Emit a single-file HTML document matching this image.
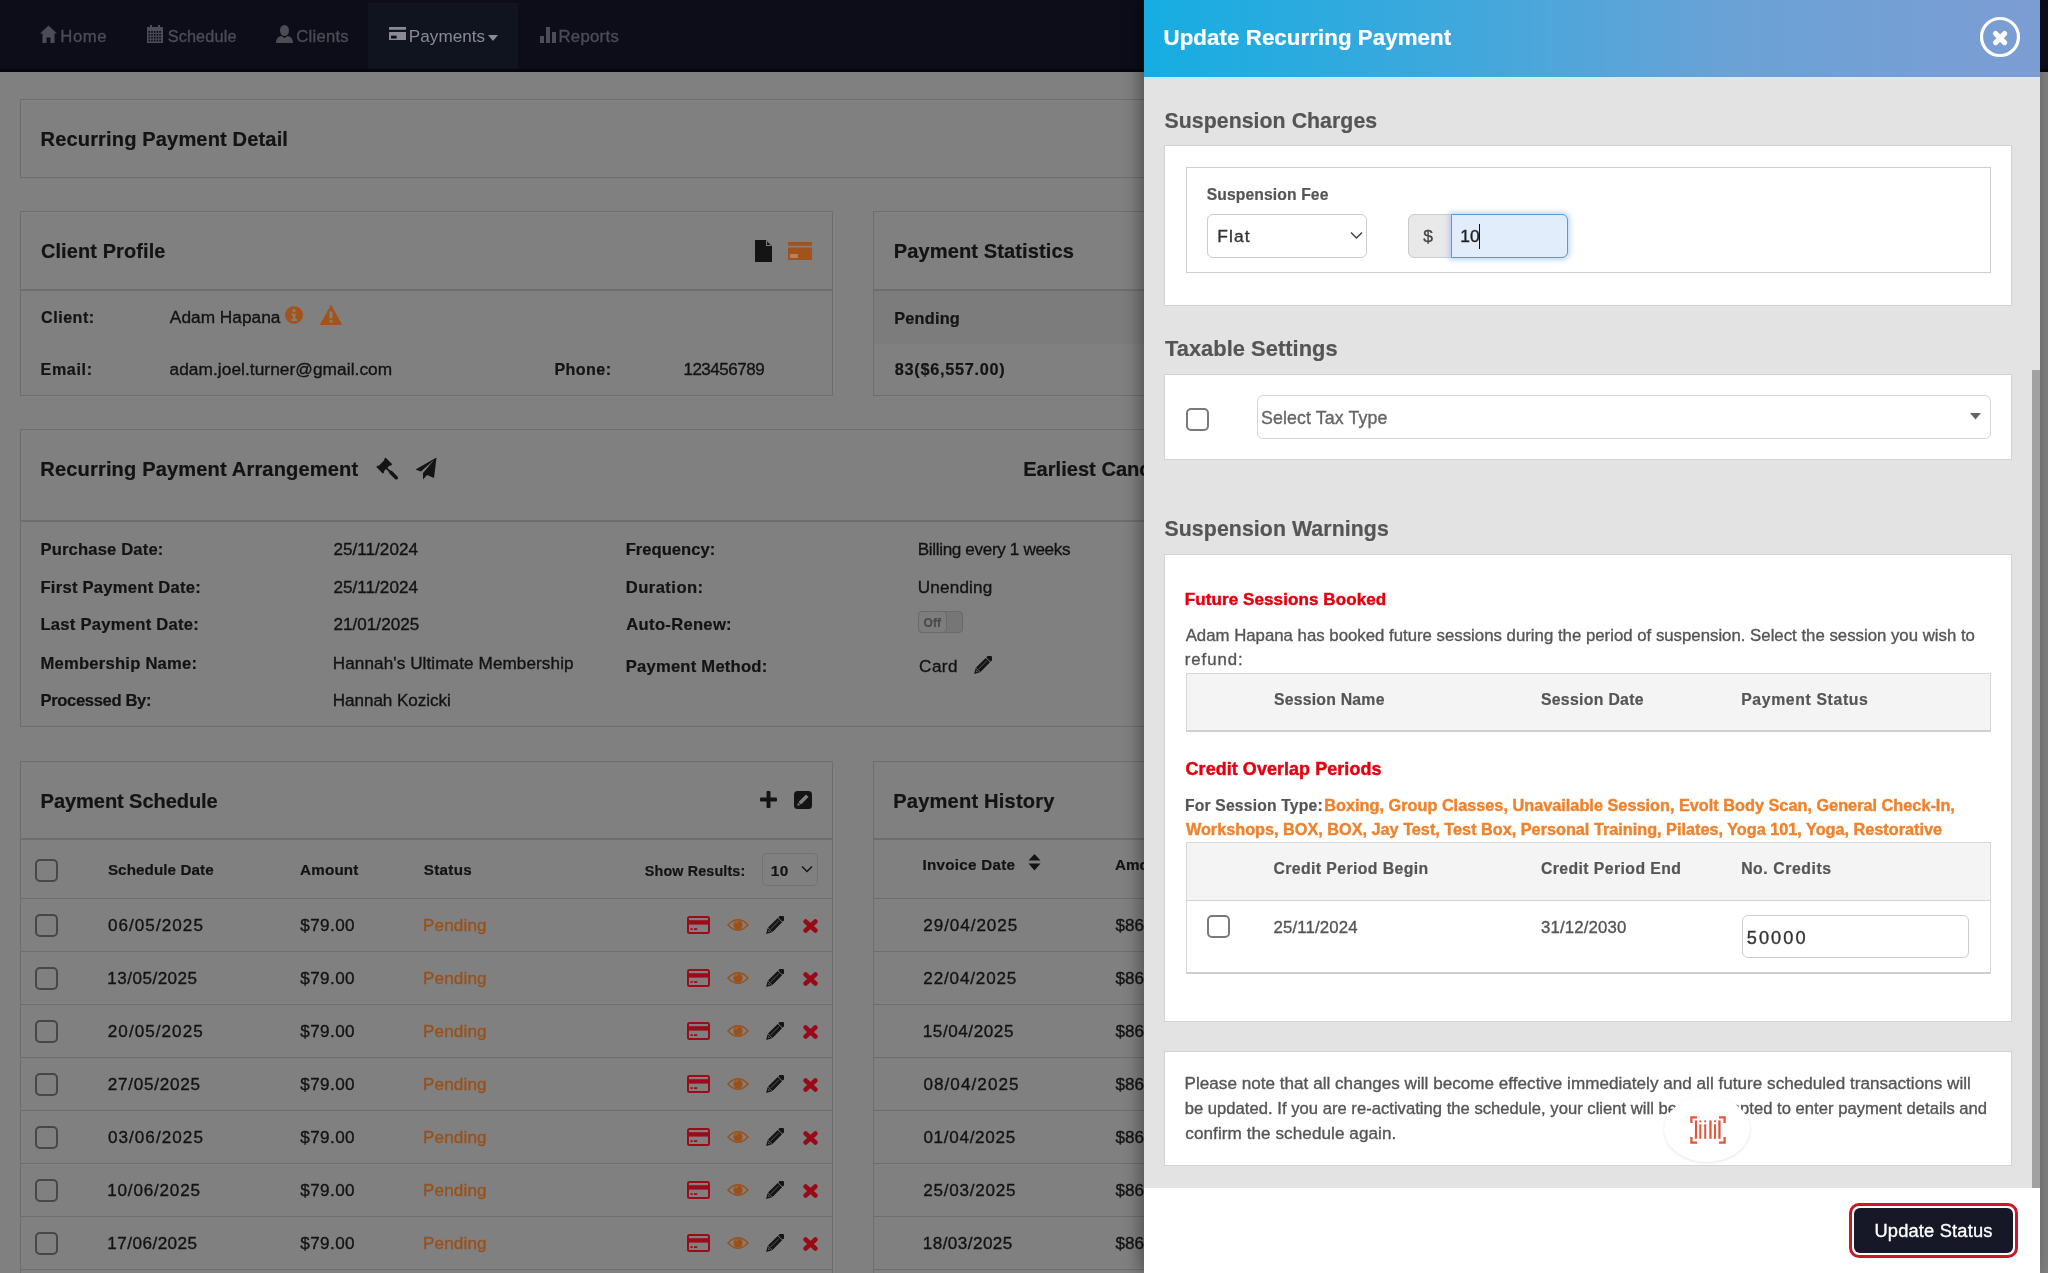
<!DOCTYPE html>
<html><head><meta charset="utf-8"><style>
html,body{margin:0;padding:0;}
body{width:2048px;height:1273px;overflow:hidden;position:relative;background:#808080;font-family:"Liberation Sans",sans-serif;}
.a{position:absolute;}
.t{position:absolute;white-space:nowrap;line-height:1;}
#w{position:absolute;left:0;top:0;width:2048px;height:1273px;will-change:transform;}
svg{display:block;}
</style></head><body><div id="w">
<div class="a" style="left:0px;top:0px;width:2048px;height:69px;background:#0c0d19;"></div><div class="a" style="left:0px;top:69px;width:2048px;height:3px;background:#06070d;"></div><div class="a" style="left:368px;top:3px;width:150px;height:66px;background:#10141e;"></div><svg class="a" style="left:40px;top:25px;" width="17" height="18" viewBox="0 0 17 18"><path d="M8.5 0.5 L17 8.5 L14.5 8.5 L14.5 18 L10.5 18 L10.5 12.5 L6.5 12.5 L6.5 18 L2.5 18 L2.5 8.5 L0 8.5 Z" fill="#4b4c54"/></svg><div class="t" style="left:60.28px;top:29px;font-size:16.7px;-webkit-text-stroke:0.35px #4b4c54;color:#4b4c54;letter-spacing:0.613px;">Home</div><svg class="a" style="left:147px;top:25px;" width="16" height="18" viewBox="0 0 16 18"><rect x="0" y="2" width="16" height="16" fill="#4b4c54"/><rect x="3" y="0" width="2" height="4" fill="#4b4c54"/><rect x="11" y="0" width="2" height="4" fill="#4b4c54"/><rect x="1.5" y="6.0" width="1.6" height="1.8" fill="#0c0d19"/><rect x="1.5" y="8.9" width="1.6" height="1.8" fill="#0c0d19"/><rect x="1.5" y="11.8" width="1.6" height="1.8" fill="#0c0d19"/><rect x="1.5" y="14.7" width="1.6" height="1.8" fill="#0c0d19"/><rect x="4.2" y="6.0" width="1.6" height="1.8" fill="#0c0d19"/><rect x="4.2" y="8.9" width="1.6" height="1.8" fill="#0c0d19"/><rect x="4.2" y="11.8" width="1.6" height="1.8" fill="#0c0d19"/><rect x="4.2" y="14.7" width="1.6" height="1.8" fill="#0c0d19"/><rect x="6.9" y="6.0" width="1.6" height="1.8" fill="#0c0d19"/><rect x="6.9" y="8.9" width="1.6" height="1.8" fill="#0c0d19"/><rect x="6.9" y="11.8" width="1.6" height="1.8" fill="#0c0d19"/><rect x="6.9" y="14.7" width="1.6" height="1.8" fill="#0c0d19"/><rect x="9.6" y="6.0" width="1.6" height="1.8" fill="#0c0d19"/><rect x="9.6" y="8.9" width="1.6" height="1.8" fill="#0c0d19"/><rect x="9.6" y="11.8" width="1.6" height="1.8" fill="#0c0d19"/><rect x="9.6" y="14.7" width="1.6" height="1.8" fill="#0c0d19"/><rect x="12.3" y="6.0" width="1.6" height="1.8" fill="#0c0d19"/><rect x="12.3" y="8.9" width="1.6" height="1.8" fill="#0c0d19"/><rect x="12.3" y="11.8" width="1.6" height="1.8" fill="#0c0d19"/><rect x="12.3" y="14.7" width="1.6" height="1.8" fill="#0c0d19"/></svg><div class="t" style="left:167.67px;top:28px;font-size:16.3px;-webkit-text-stroke:0.35px #4b4c54;color:#4b4c54;letter-spacing:0.135px;">Schedule</div><svg class="a" style="left:276px;top:25px;" width="17" height="18" viewBox="0 0 17 18"><ellipse cx="8.5" cy="5.5" rx="4.5" ry="5.5" fill="#4b4c54"/><path d="M0 18 C0 13 3 11.5 5.5 11 L8.5 13 L11.5 11 C14 11.5 17 13 17 18 Z" fill="#4b4c54"/></svg><div class="t" style="left:296.36px;top:29px;font-size:16.7px;-webkit-text-stroke:0.35px #4b4c54;color:#4b4c54;letter-spacing:0.2px;">Clients</div><svg class="a" style="left:388.5px;top:27px;" width="17.5" height="13" viewBox="0 0 17.5 13"><rect x="0" y="0" width="17.5" height="2.8" rx="0.6" fill="#8a8b92"/><rect x="0" y="5" width="17.5" height="8" rx="0.6" fill="#8a8b92"/><rect x="2" y="8.7" width="5.6" height="2.8" fill="#0a0c12"/></svg><div class="t" style="left:408.78px;top:28px;font-size:17.1px;-webkit-text-stroke:0.35px #8a8b92;color:#8a8b92;letter-spacing:0.054px;-webkit-text-stroke:0;">Payments</div><svg class="a" style="left:488px;top:35px;" width="10" height="6" viewBox="0 0 10 6"><path d="M0 0 L10 0 L5 6 Z" fill="#8a8b92"/></svg><svg class="a" style="left:540px;top:27px;" width="16" height="16" viewBox="0 0 16 16"><rect x="0" y="9" width="4" height="7" fill="#4b4c54"/><rect x="6" y="0" width="4" height="16" fill="#4b4c54"/><rect x="12" y="5" width="4" height="11" fill="#4b4c54"/></svg><div class="t" style="left:558.38px;top:29px;font-size:16.7px;-webkit-text-stroke:0.35px #4b4c54;color:#4b4c54;letter-spacing:0.338px;">Reports</div><div class="a" style="left:20px;top:99px;width:1200px;height:79px;border:1px solid #6e6e6e;box-sizing:border-box;"></div><div class="t" style="left:40.51px;top:129px;font-size:20.1px;font-weight:bold;-webkit-text-stroke:0.2px #131313;color:#131313;letter-spacing:0.126px;">Recurring Payment Detail</div><div class="a" style="left:20px;top:211px;width:813px;height:185px;border:1px solid #6e6e6e;box-sizing:border-box;"></div><div class="a" style="left:20px;top:289px;width:813px;height:2px;background:#6e6e6e;"></div><div class="t" style="left:40.89px;top:242px;font-size:19.9px;font-weight:bold;-webkit-text-stroke:0.2px #131313;color:#131313;letter-spacing:0.142px;">Client Profile</div><svg class="a" style="left:755px;top:240px;" width="17" height="22" viewBox="0 0 17 22"><path d="M0 0 L11 0 L17 6 L17 22 L0 22 Z" fill="#141414"/><path d="M11 0 L11 6 L17 6 Z" fill="#808080"/><path d="M12 1.5 L12 5 L15.5 5 Z" fill="#141414"/></svg><svg class="a" style="left:788px;top:242px;" width="24" height="18" viewBox="0 0 24 18"><rect x="0" y="0" width="24" height="18" fill="#a2521b"/><rect x="0" y="3.8" width="24" height="1.8" fill="#808080"/><rect x="2.1" y="12" width="7.8" height="4" fill="#b48462"/></svg><div class="t" style="left:41.01px;top:309px;font-size:16.1px;font-weight:bold;-webkit-text-stroke:0.2px #131313;color:#131313;letter-spacing:0.522px;">Client:</div><div class="t" style="left:169.87px;top:309px;font-size:17.3px;-webkit-text-stroke:0.35px #131313;color:#131313;letter-spacing:0.006px;">Adam Hapana</div><svg class="a" style="left:285px;top:306px;" width="18" height="18" viewBox="0 0 18 18"><circle cx="9" cy="9" r="9" fill="#a4531b"/><circle cx="9" cy="4.6" r="1.7" fill="#808080"/><path d="M6.5 7.5 L10.5 7.5 L10.5 13 L12 13 L12 15 L6.5 15 L6.5 13 L8 13 L8 9.5 L6.5 9.5 Z" fill="#808080"/></svg><svg class="a" style="left:320px;top:305px;" width="22" height="20" viewBox="0 0 22 20"><path d="M11 0.5 L21.5 19.5 L0.5 19.5 Z" fill="#a4531b" stroke="#a4531b" stroke-linejoin="round" stroke-width="1"/><rect x="9.6" y="6.5" width="2.8" height="7" fill="#808080"/><rect x="9.6" y="15" width="2.8" height="2.6" fill="#808080"/></svg><div class="t" style="left:40.52px;top:361px;font-size:16.1px;font-weight:bold;-webkit-text-stroke:0.2px #131313;color:#131313;letter-spacing:0.642px;">Email:</div><div class="t" style="left:169.47px;top:361px;font-size:17.3px;-webkit-text-stroke:0.35px #131313;color:#131313;letter-spacing:0.062px;">adam.joel.turner@gmail.com</div><div class="t" style="left:554.42px;top:361px;font-size:16.1px;font-weight:bold;-webkit-text-stroke:0.2px #131313;color:#131313;letter-spacing:0.409px;">Phone:</div><div class="t" style="left:683.43px;top:361px;font-size:17.0px;-webkit-text-stroke:0.35px #131313;color:#131313;letter-spacing:-0.48px;">123456789</div><div class="a" style="left:873px;top:211px;width:400px;height:185px;border:1px solid #6e6e6e;box-sizing:border-box;"></div><div class="a" style="left:873px;top:289px;width:400px;height:2px;background:#6e6e6e;"></div><div class="a" style="left:874px;top:291px;width:280px;height:53px;background:#7c7c7c;"></div><div class="t" style="left:893.71px;top:241px;font-size:20.1px;font-weight:bold;-webkit-text-stroke:0.2px #131313;color:#131313;letter-spacing:0.088px;">Payment Statistics</div><div class="t" style="left:894.21px;top:310px;font-size:16.3px;font-weight:bold;-webkit-text-stroke:0.2px #131313;color:#131313;letter-spacing:0.23px;">Pending</div><div class="t" style="left:894.84px;top:361px;font-size:16.3px;font-weight:bold;-webkit-text-stroke:0.2px #131313;color:#131313;letter-spacing:0.703px;">83($6,557.00)</div><div class="a" style="left:20px;top:429px;width:1200px;height:298px;border:1px solid #6e6e6e;box-sizing:border-box;"></div><div class="a" style="left:20px;top:520px;width:1200px;height:2px;background:#6e6e6e;"></div><div class="t" style="left:40.31px;top:459px;font-size:20.1px;font-weight:bold;-webkit-text-stroke:0.2px #131313;color:#131313;letter-spacing:0.134px;">Recurring Payment Arrangement</div><svg class="a" style="left:376px;top:457px;" width="23" height="23" viewBox="0 0 23 23"><g transform="translate(8.2 8.6) rotate(-45)"><rect x="-5" y="-3.8" width="10" height="7.6" fill="#141414"/><rect x="-6.6" y="-4.7" width="2.4" height="9.4" rx="0.6" fill="#141414"/><rect x="4.2" y="-4.7" width="2.4" height="9.4" rx="0.6" fill="#141414"/></g><path d="M10.5 11.2 L14.8 15.5" stroke="#141414" stroke-width="1.8"/><path d="M15 15.5 L20.2 20.7" stroke="#141414" stroke-width="3.6" stroke-linecap="round"/></svg><svg class="a" style="left:415px;top:457px;" width="22" height="23" viewBox="0 0 22 23"><path d="M21.5 0.5 L0.5 12.5 L6 14.5 L19 3 L8 16 L8 22.5 L12 18 L19 21 Z" fill="#141414"/></svg><div class="t" style="left:1023.21px;top:459px;font-size:20.1px;font-weight:bold;-webkit-text-stroke:0.2px #131313;color:#131313;letter-spacing:0px;">Earliest Cancellation</div><div class="t" style="left:40.49px;top:542px;font-size:16.6px;font-weight:bold;-webkit-text-stroke:0.2px #131313;color:#131313;letter-spacing:0.158px;">Purchase Date:</div><div class="t" style="left:333.4px;top:541px;font-size:17.1px;-webkit-text-stroke:0.35px #131313;color:#131313;letter-spacing:0.038px;">25/11/2024</div><div class="t" style="left:40.49px;top:580px;font-size:16.6px;font-weight:bold;-webkit-text-stroke:0.2px #131313;color:#131313;letter-spacing:0.249px;">First Payment Date:</div><div class="t" style="left:333.4px;top:579px;font-size:17.1px;-webkit-text-stroke:0.35px #131313;color:#131313;letter-spacing:0.038px;">25/11/2024</div><div class="t" style="left:40.49px;top:617px;font-size:16.6px;font-weight:bold;-webkit-text-stroke:0.2px #131313;color:#131313;letter-spacing:0.252px;">Last Payment Date:</div><div class="t" style="left:333.4px;top:616px;font-size:17.1px;-webkit-text-stroke:0.35px #131313;color:#131313;letter-spacing:0.037px;">21/01/2025</div><div class="t" style="left:40.49px;top:656px;font-size:16.6px;font-weight:bold;-webkit-text-stroke:0.2px #131313;color:#131313;letter-spacing:0.233px;">Membership Name:</div><div class="t" style="left:332.76px;top:655px;font-size:17.1px;-webkit-text-stroke:0.35px #131313;color:#131313;letter-spacing:0.106px;">Hannah's Ultimate Membership</div><div class="t" style="left:40.49px;top:693px;font-size:16.6px;font-weight:bold;-webkit-text-stroke:0.2px #131313;color:#131313;letter-spacing:-0.361px;">Processed By:</div><div class="t" style="left:332.76px;top:692px;font-size:17.1px;-webkit-text-stroke:0.35px #131313;color:#131313;letter-spacing:-0.055px;">Hannah Kozicki</div><div class="t" style="left:625.69px;top:542px;font-size:16.6px;font-weight:bold;-webkit-text-stroke:0.2px #131313;color:#131313;letter-spacing:0.01px;">Frequency:</div><div class="t" style="left:917.76px;top:541px;font-size:17.1px;-webkit-text-stroke:0.35px #131313;color:#131313;letter-spacing:-0.342px;">Billing every 1 weeks</div><div class="t" style="left:625.69px;top:580px;font-size:16.6px;font-weight:bold;-webkit-text-stroke:0.2px #131313;color:#131313;letter-spacing:0.461px;">Duration:</div><div class="t" style="left:917.82px;top:579px;font-size:17.1px;-webkit-text-stroke:0.35px #131313;color:#131313;letter-spacing:0.176px;">Unending</div><div class="t" style="left:626.35px;top:617px;font-size:16.6px;font-weight:bold;-webkit-text-stroke:0.2px #131313;color:#131313;letter-spacing:0.296px;">Auto-Renew:</div><div class="a" style="left:918px;top:611px;width:45px;height:22px;border:1px solid #6a6a6a;border-radius:4px;box-sizing:border-box;background:#767676;"></div><div class="a" style="left:918px;top:611px;width:29px;height:22px;border:1px solid #6a6a6a;border-radius:4px;box-sizing:border-box;background:#7d7d7d;"></div><div class="t" style="left:923.56px;top:617px;font-size:12px;font-weight:bold;-webkit-text-stroke:0.2px #4a4a4a;color:#4a4a4a;letter-spacing:0px;">Off</div><div class="t" style="left:625.69px;top:659px;font-size:16.6px;font-weight:bold;-webkit-text-stroke:0.2px #131313;color:#131313;letter-spacing:0.233px;">Payment Method:</div><div class="t" style="left:919.11px;top:658px;font-size:17.1px;-webkit-text-stroke:0.35px #131313;color:#131313;letter-spacing:0.423px;">Card</div><svg class="a" style="left:974px;top:656px;" width="18" height="18" viewBox="0 0 18 18"><g transform="rotate(-45 9 9)"><path d="M-3.6 9 L1.8 5.9 L1.8 12.1 Z" fill="#141414"/><path d="M-1.2 9 L0.9 7.8 L0.9 10.2 Z" fill="#5a5a5a"/><rect x="2.3" y="5.9" width="13.6" height="6.2" fill="#141414"/><rect x="3.2" y="8.3" width="11.5" height="0.9" fill="#4a4a4a"/><rect x="16.6" y="5.9" width="4.6" height="6.2" rx="1.2" fill="#141414"/></g></svg><div class="a" style="left:20px;top:761px;width:813px;height:600px;border:1px solid #6e6e6e;box-sizing:border-box;"></div><div class="a" style="left:20px;top:838px;width:813px;height:2px;background:#6e6e6e;"></div><div class="t" style="left:40.61px;top:791px;font-size:20.1px;font-weight:bold;-webkit-text-stroke:0.2px #131313;color:#131313;letter-spacing:-0.105px;">Payment Schedule</div><svg class="a" style="left:760px;top:791px;" width="17" height="17" viewBox="0 0 17 17"><rect x="6.5" y="0" width="4" height="17" rx="1" fill="#141414"/><rect x="0" y="6.5" width="17" height="4" rx="1" fill="#141414"/></svg><svg class="a" style="left:794px;top:791px;" width="18" height="18" viewBox="0 0 18 18"><rect x="0" y="0" width="18" height="18" rx="3.5" fill="#141414"/><path d="M12 3.5 L14.5 6 L7 13.5 L4.5 11 Z" fill="#808080"/><path d="M4 11.8 L6.2 14 L3.3 14.7 Z" fill="#808080"/></svg><div class="a" style="left:35px;top:858.5px;width:23px;height:23px;border:2.6px solid #474747;border-radius:5px;box-sizing:border-box;"></div><div class="t" style="left:107.88px;top:862px;font-size:15.2px;font-weight:bold;-webkit-text-stroke:0.2px #131313;color:#131313;letter-spacing:0.091px;">Schedule Date</div><div class="t" style="left:300.06px;top:862px;font-size:15.2px;font-weight:bold;-webkit-text-stroke:0.2px #131313;color:#131313;letter-spacing:0.2px;">Amount</div><div class="t" style="left:423.68px;top:862px;font-size:15.2px;font-weight:bold;-webkit-text-stroke:0.2px #131313;color:#131313;letter-spacing:0.337px;">Status</div><div class="t" style="left:644.82px;top:864px;font-size:14.3px;font-weight:bold;-webkit-text-stroke:0.2px #131313;color:#131313;letter-spacing:0.158px;">Show Results:</div><div class="a" style="left:761.5px;top:853px;width:56px;height:33px;border:1px solid #727272;border-radius:5px;box-sizing:border-box;"></div><div class="t" style="left:770.8px;top:863px;font-size:15.4px;font-weight:bold;-webkit-text-stroke:0.2px #131313;color:#131313;letter-spacing:0.446px;">10</div><svg class="a" style="left:801px;top:865px;" width="12" height="8" viewBox="0 0 12 8"><path d="M1 1.5 L6 6.5 L11 1.5" fill="none" stroke="#141414" stroke-width="1.5"/></svg><div class="a" style="left:20px;top:898px;width:813px;height:1px;background:#6e6e6e;"></div><div class="a" style="left:35px;top:914.0px;width:23px;height:23px;border:2.6px solid #474747;border-radius:5px;box-sizing:border-box;"></div><div class="t" style="left:107.92px;top:917px;font-size:17.1px;-webkit-text-stroke:0.35px #131313;color:#131313;letter-spacing:1.049px;">06/05/2025</div><div class="t" style="left:300.25px;top:917px;font-size:17.1px;-webkit-text-stroke:0.35px #131313;color:#131313;letter-spacing:0.406px;">$79.00</div><div class="t" style="left:422.96px;top:917px;font-size:17.1px;-webkit-text-stroke:0.35px #9a5019;color:#9a5019;letter-spacing:0.146px;">Pending</div><svg class="a" style="left:686.5px;top:915.8px;" width="23" height="18" viewBox="0 0 23 18"><rect x="1" y="1" width="21" height="16" rx="1.5" fill="none" stroke="#9e0b18" stroke-width="2"/><rect x="1" y="4.2" width="21" height="4.4" fill="#9e0b18"/><rect x="3.5" y="12.2" width="2.2" height="1.8" fill="#9e0b18"/><rect x="7" y="12.2" width="3.2" height="1.8" fill="#9e0b18"/></svg><svg class="a" style="left:727px;top:918.3px;" width="22" height="14" viewBox="0 0 22 14"><path d="M1 7 Q11 -3.5 21 7 Q11 17.5 1 7 Z" fill="none" stroke="#9a5019" stroke-width="1.5"/><circle cx="11" cy="7" r="4.6" fill="#9a5019"/><path d="M8.4 5.6 A3 3 0 0 1 11.2 3.6" stroke="#a86a3a" stroke-width="1.1" fill="none"/></svg><svg class="a" style="left:766px;top:915.8px;" width="18" height="18" viewBox="0 0 18 18"><g transform="rotate(-45 9 9)"><path d="M-3.6 9 L1.8 5.9 L1.8 12.1 Z" fill="#141414"/><path d="M-1.2 9 L0.9 7.8 L0.9 10.2 Z" fill="#5a5a5a"/><rect x="2.3" y="5.9" width="13.6" height="6.2" fill="#141414"/><rect x="3.2" y="8.3" width="11.5" height="0.9" fill="#4a4a4a"/><rect x="16.6" y="5.9" width="4.6" height="6.2" rx="1.2" fill="#141414"/></g></svg><svg class="a" style="left:803px;top:918.5999999999999px;" width="15" height="14" viewBox="0 0 15 14"><path d="M2.6 2.5 L12.4 11.5 M12.4 2.5 L2.6 11.5" stroke="#980a15" stroke-width="4.5" stroke-linecap="round"/></svg><div class="a" style="left:20px;top:950.5px;width:813px;height:1px;background:#6e6e6e;"></div><div class="a" style="left:35px;top:967.0px;width:23px;height:23px;border:2.6px solid #474747;border-radius:5px;box-sizing:border-box;"></div><div class="t" style="left:107.23px;top:970px;font-size:17.1px;-webkit-text-stroke:0.35px #131313;color:#131313;letter-spacing:0.482px;">13/05/2025</div><div class="t" style="left:300.25px;top:970px;font-size:17.1px;-webkit-text-stroke:0.35px #131313;color:#131313;letter-spacing:0.406px;">$79.00</div><div class="t" style="left:422.96px;top:970px;font-size:17.1px;-webkit-text-stroke:0.35px #9a5019;color:#9a5019;letter-spacing:0.146px;">Pending</div><svg class="a" style="left:686.5px;top:968.8px;" width="23" height="18" viewBox="0 0 23 18"><rect x="1" y="1" width="21" height="16" rx="1.5" fill="none" stroke="#9e0b18" stroke-width="2"/><rect x="1" y="4.2" width="21" height="4.4" fill="#9e0b18"/><rect x="3.5" y="12.2" width="2.2" height="1.8" fill="#9e0b18"/><rect x="7" y="12.2" width="3.2" height="1.8" fill="#9e0b18"/></svg><svg class="a" style="left:727px;top:971.3px;" width="22" height="14" viewBox="0 0 22 14"><path d="M1 7 Q11 -3.5 21 7 Q11 17.5 1 7 Z" fill="none" stroke="#9a5019" stroke-width="1.5"/><circle cx="11" cy="7" r="4.6" fill="#9a5019"/><path d="M8.4 5.6 A3 3 0 0 1 11.2 3.6" stroke="#a86a3a" stroke-width="1.1" fill="none"/></svg><svg class="a" style="left:766px;top:968.8px;" width="18" height="18" viewBox="0 0 18 18"><g transform="rotate(-45 9 9)"><path d="M-3.6 9 L1.8 5.9 L1.8 12.1 Z" fill="#141414"/><path d="M-1.2 9 L0.9 7.8 L0.9 10.2 Z" fill="#5a5a5a"/><rect x="2.3" y="5.9" width="13.6" height="6.2" fill="#141414"/><rect x="3.2" y="8.3" width="11.5" height="0.9" fill="#4a4a4a"/><rect x="16.6" y="5.9" width="4.6" height="6.2" rx="1.2" fill="#141414"/></g></svg><svg class="a" style="left:803px;top:971.5999999999999px;" width="15" height="14" viewBox="0 0 15 14"><path d="M2.6 2.5 L12.4 11.5 M12.4 2.5 L2.6 11.5" stroke="#980a15" stroke-width="4.5" stroke-linecap="round"/></svg><div class="a" style="left:20px;top:1003.5px;width:813px;height:1px;background:#6e6e6e;"></div><div class="a" style="left:35px;top:1020.0px;width:23px;height:23px;border:2.6px solid #474747;border-radius:5px;box-sizing:border-box;"></div><div class="t" style="left:107.8px;top:1023px;font-size:17.1px;-webkit-text-stroke:0.35px #131313;color:#131313;letter-spacing:1.039px;">20/05/2025</div><div class="t" style="left:300.25px;top:1023px;font-size:17.1px;-webkit-text-stroke:0.35px #131313;color:#131313;letter-spacing:0.406px;">$79.00</div><div class="t" style="left:422.96px;top:1023px;font-size:17.1px;-webkit-text-stroke:0.35px #9a5019;color:#9a5019;letter-spacing:0.146px;">Pending</div><svg class="a" style="left:686.5px;top:1021.8px;" width="23" height="18" viewBox="0 0 23 18"><rect x="1" y="1" width="21" height="16" rx="1.5" fill="none" stroke="#9e0b18" stroke-width="2"/><rect x="1" y="4.2" width="21" height="4.4" fill="#9e0b18"/><rect x="3.5" y="12.2" width="2.2" height="1.8" fill="#9e0b18"/><rect x="7" y="12.2" width="3.2" height="1.8" fill="#9e0b18"/></svg><svg class="a" style="left:727px;top:1024.3px;" width="22" height="14" viewBox="0 0 22 14"><path d="M1 7 Q11 -3.5 21 7 Q11 17.5 1 7 Z" fill="none" stroke="#9a5019" stroke-width="1.5"/><circle cx="11" cy="7" r="4.6" fill="#9a5019"/><path d="M8.4 5.6 A3 3 0 0 1 11.2 3.6" stroke="#a86a3a" stroke-width="1.1" fill="none"/></svg><svg class="a" style="left:766px;top:1021.8px;" width="18" height="18" viewBox="0 0 18 18"><g transform="rotate(-45 9 9)"><path d="M-3.6 9 L1.8 5.9 L1.8 12.1 Z" fill="#141414"/><path d="M-1.2 9 L0.9 7.8 L0.9 10.2 Z" fill="#5a5a5a"/><rect x="2.3" y="5.9" width="13.6" height="6.2" fill="#141414"/><rect x="3.2" y="8.3" width="11.5" height="0.9" fill="#4a4a4a"/><rect x="16.6" y="5.9" width="4.6" height="6.2" rx="1.2" fill="#141414"/></g></svg><svg class="a" style="left:803px;top:1024.6px;" width="15" height="14" viewBox="0 0 15 14"><path d="M2.6 2.5 L12.4 11.5 M12.4 2.5 L2.6 11.5" stroke="#980a15" stroke-width="4.5" stroke-linecap="round"/></svg><div class="a" style="left:20px;top:1056.5px;width:813px;height:1px;background:#6e6e6e;"></div><div class="a" style="left:35px;top:1073.0px;width:23px;height:23px;border:2.6px solid #474747;border-radius:5px;box-sizing:border-box;"></div><div class="t" style="left:107.8px;top:1076px;font-size:17.1px;-webkit-text-stroke:0.35px #131313;color:#131313;letter-spacing:0.729px;">27/05/2025</div><div class="t" style="left:300.25px;top:1076px;font-size:17.1px;-webkit-text-stroke:0.35px #131313;color:#131313;letter-spacing:0.406px;">$79.00</div><div class="t" style="left:422.96px;top:1076px;font-size:17.1px;-webkit-text-stroke:0.35px #9a5019;color:#9a5019;letter-spacing:0.146px;">Pending</div><svg class="a" style="left:686.5px;top:1074.8px;" width="23" height="18" viewBox="0 0 23 18"><rect x="1" y="1" width="21" height="16" rx="1.5" fill="none" stroke="#9e0b18" stroke-width="2"/><rect x="1" y="4.2" width="21" height="4.4" fill="#9e0b18"/><rect x="3.5" y="12.2" width="2.2" height="1.8" fill="#9e0b18"/><rect x="7" y="12.2" width="3.2" height="1.8" fill="#9e0b18"/></svg><svg class="a" style="left:727px;top:1077.3px;" width="22" height="14" viewBox="0 0 22 14"><path d="M1 7 Q11 -3.5 21 7 Q11 17.5 1 7 Z" fill="none" stroke="#9a5019" stroke-width="1.5"/><circle cx="11" cy="7" r="4.6" fill="#9a5019"/><path d="M8.4 5.6 A3 3 0 0 1 11.2 3.6" stroke="#a86a3a" stroke-width="1.1" fill="none"/></svg><svg class="a" style="left:766px;top:1074.8px;" width="18" height="18" viewBox="0 0 18 18"><g transform="rotate(-45 9 9)"><path d="M-3.6 9 L1.8 5.9 L1.8 12.1 Z" fill="#141414"/><path d="M-1.2 9 L0.9 7.8 L0.9 10.2 Z" fill="#5a5a5a"/><rect x="2.3" y="5.9" width="13.6" height="6.2" fill="#141414"/><rect x="3.2" y="8.3" width="11.5" height="0.9" fill="#4a4a4a"/><rect x="16.6" y="5.9" width="4.6" height="6.2" rx="1.2" fill="#141414"/></g></svg><svg class="a" style="left:803px;top:1077.6px;" width="15" height="14" viewBox="0 0 15 14"><path d="M2.6 2.5 L12.4 11.5 M12.4 2.5 L2.6 11.5" stroke="#980a15" stroke-width="4.5" stroke-linecap="round"/></svg><div class="a" style="left:20px;top:1109.5px;width:813px;height:1px;background:#6e6e6e;"></div><div class="a" style="left:35px;top:1126.0px;width:23px;height:23px;border:2.6px solid #474747;border-radius:5px;box-sizing:border-box;"></div><div class="t" style="left:107.92px;top:1129px;font-size:17.1px;-webkit-text-stroke:0.35px #131313;color:#131313;letter-spacing:1.049px;">03/06/2025</div><div class="t" style="left:300.25px;top:1129px;font-size:17.1px;-webkit-text-stroke:0.35px #131313;color:#131313;letter-spacing:0.406px;">$79.00</div><div class="t" style="left:422.96px;top:1129px;font-size:17.1px;-webkit-text-stroke:0.35px #9a5019;color:#9a5019;letter-spacing:0.146px;">Pending</div><svg class="a" style="left:686.5px;top:1127.8px;" width="23" height="18" viewBox="0 0 23 18"><rect x="1" y="1" width="21" height="16" rx="1.5" fill="none" stroke="#9e0b18" stroke-width="2"/><rect x="1" y="4.2" width="21" height="4.4" fill="#9e0b18"/><rect x="3.5" y="12.2" width="2.2" height="1.8" fill="#9e0b18"/><rect x="7" y="12.2" width="3.2" height="1.8" fill="#9e0b18"/></svg><svg class="a" style="left:727px;top:1130.3px;" width="22" height="14" viewBox="0 0 22 14"><path d="M1 7 Q11 -3.5 21 7 Q11 17.5 1 7 Z" fill="none" stroke="#9a5019" stroke-width="1.5"/><circle cx="11" cy="7" r="4.6" fill="#9a5019"/><path d="M8.4 5.6 A3 3 0 0 1 11.2 3.6" stroke="#a86a3a" stroke-width="1.1" fill="none"/></svg><svg class="a" style="left:766px;top:1127.8px;" width="18" height="18" viewBox="0 0 18 18"><g transform="rotate(-45 9 9)"><path d="M-3.6 9 L1.8 5.9 L1.8 12.1 Z" fill="#141414"/><path d="M-1.2 9 L0.9 7.8 L0.9 10.2 Z" fill="#5a5a5a"/><rect x="2.3" y="5.9" width="13.6" height="6.2" fill="#141414"/><rect x="3.2" y="8.3" width="11.5" height="0.9" fill="#4a4a4a"/><rect x="16.6" y="5.9" width="4.6" height="6.2" rx="1.2" fill="#141414"/></g></svg><svg class="a" style="left:803px;top:1130.6px;" width="15" height="14" viewBox="0 0 15 14"><path d="M2.6 2.5 L12.4 11.5 M12.4 2.5 L2.6 11.5" stroke="#980a15" stroke-width="4.5" stroke-linecap="round"/></svg><div class="a" style="left:20px;top:1162.5px;width:813px;height:1px;background:#6e6e6e;"></div><div class="a" style="left:35px;top:1179.0px;width:23px;height:23px;border:2.6px solid #474747;border-radius:5px;box-sizing:border-box;"></div><div class="t" style="left:107.23px;top:1182px;font-size:17.1px;-webkit-text-stroke:0.35px #131313;color:#131313;letter-spacing:0.799px;">10/06/2025</div><div class="t" style="left:300.25px;top:1182px;font-size:17.1px;-webkit-text-stroke:0.35px #131313;color:#131313;letter-spacing:0.406px;">$79.00</div><div class="t" style="left:422.96px;top:1182px;font-size:17.1px;-webkit-text-stroke:0.35px #9a5019;color:#9a5019;letter-spacing:0.146px;">Pending</div><svg class="a" style="left:686.5px;top:1180.8px;" width="23" height="18" viewBox="0 0 23 18"><rect x="1" y="1" width="21" height="16" rx="1.5" fill="none" stroke="#9e0b18" stroke-width="2"/><rect x="1" y="4.2" width="21" height="4.4" fill="#9e0b18"/><rect x="3.5" y="12.2" width="2.2" height="1.8" fill="#9e0b18"/><rect x="7" y="12.2" width="3.2" height="1.8" fill="#9e0b18"/></svg><svg class="a" style="left:727px;top:1183.3px;" width="22" height="14" viewBox="0 0 22 14"><path d="M1 7 Q11 -3.5 21 7 Q11 17.5 1 7 Z" fill="none" stroke="#9a5019" stroke-width="1.5"/><circle cx="11" cy="7" r="4.6" fill="#9a5019"/><path d="M8.4 5.6 A3 3 0 0 1 11.2 3.6" stroke="#a86a3a" stroke-width="1.1" fill="none"/></svg><svg class="a" style="left:766px;top:1180.8px;" width="18" height="18" viewBox="0 0 18 18"><g transform="rotate(-45 9 9)"><path d="M-3.6 9 L1.8 5.9 L1.8 12.1 Z" fill="#141414"/><path d="M-1.2 9 L0.9 7.8 L0.9 10.2 Z" fill="#5a5a5a"/><rect x="2.3" y="5.9" width="13.6" height="6.2" fill="#141414"/><rect x="3.2" y="8.3" width="11.5" height="0.9" fill="#4a4a4a"/><rect x="16.6" y="5.9" width="4.6" height="6.2" rx="1.2" fill="#141414"/></g></svg><svg class="a" style="left:803px;top:1183.6px;" width="15" height="14" viewBox="0 0 15 14"><path d="M2.6 2.5 L12.4 11.5 M12.4 2.5 L2.6 11.5" stroke="#980a15" stroke-width="4.5" stroke-linecap="round"/></svg><div class="a" style="left:20px;top:1215.5px;width:813px;height:1px;background:#6e6e6e;"></div><div class="a" style="left:35px;top:1232.0px;width:23px;height:23px;border:2.6px solid #474747;border-radius:5px;box-sizing:border-box;"></div><div class="t" style="left:107.23px;top:1235px;font-size:17.1px;-webkit-text-stroke:0.35px #131313;color:#131313;letter-spacing:0.482px;">17/06/2025</div><div class="t" style="left:300.25px;top:1235px;font-size:17.1px;-webkit-text-stroke:0.35px #131313;color:#131313;letter-spacing:0.406px;">$79.00</div><div class="t" style="left:422.96px;top:1235px;font-size:17.1px;-webkit-text-stroke:0.35px #9a5019;color:#9a5019;letter-spacing:0.146px;">Pending</div><svg class="a" style="left:686.5px;top:1233.8px;" width="23" height="18" viewBox="0 0 23 18"><rect x="1" y="1" width="21" height="16" rx="1.5" fill="none" stroke="#9e0b18" stroke-width="2"/><rect x="1" y="4.2" width="21" height="4.4" fill="#9e0b18"/><rect x="3.5" y="12.2" width="2.2" height="1.8" fill="#9e0b18"/><rect x="7" y="12.2" width="3.2" height="1.8" fill="#9e0b18"/></svg><svg class="a" style="left:727px;top:1236.3px;" width="22" height="14" viewBox="0 0 22 14"><path d="M1 7 Q11 -3.5 21 7 Q11 17.5 1 7 Z" fill="none" stroke="#9a5019" stroke-width="1.5"/><circle cx="11" cy="7" r="4.6" fill="#9a5019"/><path d="M8.4 5.6 A3 3 0 0 1 11.2 3.6" stroke="#a86a3a" stroke-width="1.1" fill="none"/></svg><svg class="a" style="left:766px;top:1233.8px;" width="18" height="18" viewBox="0 0 18 18"><g transform="rotate(-45 9 9)"><path d="M-3.6 9 L1.8 5.9 L1.8 12.1 Z" fill="#141414"/><path d="M-1.2 9 L0.9 7.8 L0.9 10.2 Z" fill="#5a5a5a"/><rect x="2.3" y="5.9" width="13.6" height="6.2" fill="#141414"/><rect x="3.2" y="8.3" width="11.5" height="0.9" fill="#4a4a4a"/><rect x="16.6" y="5.9" width="4.6" height="6.2" rx="1.2" fill="#141414"/></g></svg><svg class="a" style="left:803px;top:1236.6px;" width="15" height="14" viewBox="0 0 15 14"><path d="M2.6 2.5 L12.4 11.5 M12.4 2.5 L2.6 11.5" stroke="#980a15" stroke-width="4.5" stroke-linecap="round"/></svg><div class="a" style="left:20px;top:1268.5px;width:813px;height:1px;background:#6e6e6e;"></div><div class="a" style="left:873px;top:761px;width:400px;height:600px;border:1px solid #6e6e6e;box-sizing:border-box;"></div><div class="a" style="left:873px;top:838px;width:400px;height:2px;background:#6e6e6e;"></div><div class="t" style="left:893.21px;top:791px;font-size:20.1px;font-weight:bold;-webkit-text-stroke:0.2px #131313;color:#131313;letter-spacing:0.192px;">Payment History</div><div class="t" style="left:922.5px;top:857px;font-size:15.2px;font-weight:bold;-webkit-text-stroke:0.2px #131313;color:#131313;letter-spacing:0.275px;">Invoice Date</div><svg class="a" style="left:1027.5px;top:854px;" width="13" height="17" viewBox="0 0 13 17"><path d="M6.5 0 L12.5 6.5 L0.5 6.5 Z M0.5 9.5 L12.5 9.5 L6.5 16.5 Z" fill="#141414"/></svg><div class="t" style="left:1115.06px;top:857px;font-size:15.2px;font-weight:bold;-webkit-text-stroke:0.2px #131313;color:#131313;letter-spacing:0px;">Amount</div><div class="a" style="left:873px;top:898px;width:400px;height:1px;background:#6e6e6e;"></div><div class="t" style="left:923.3px;top:917px;font-size:17.1px;-webkit-text-stroke:0.35px #131313;color:#131313;letter-spacing:0.931px;">29/04/2025</div><div class="t" style="left:1115.55px;top:917px;font-size:17.1px;-webkit-text-stroke:0.35px #131313;color:#131313;letter-spacing:0px;">$86.90</div><div class="a" style="left:873px;top:950.5px;width:400px;height:1px;background:#6e6e6e;"></div><div class="t" style="left:923.3px;top:970px;font-size:17.1px;-webkit-text-stroke:0.35px #131313;color:#131313;letter-spacing:0.83px;">22/04/2025</div><div class="t" style="left:1115.55px;top:970px;font-size:17.1px;-webkit-text-stroke:0.35px #131313;color:#131313;letter-spacing:0px;">$86.90</div><div class="a" style="left:873px;top:1003.5px;width:400px;height:1px;background:#6e6e6e;"></div><div class="t" style="left:922.73px;top:1023px;font-size:17.1px;-webkit-text-stroke:0.35px #131313;color:#131313;letter-spacing:0.572px;">15/04/2025</div><div class="t" style="left:1115.55px;top:1023px;font-size:17.1px;-webkit-text-stroke:0.35px #131313;color:#131313;letter-spacing:0px;">$86.90</div><div class="a" style="left:873px;top:1056.5px;width:400px;height:1px;background:#6e6e6e;"></div><div class="t" style="left:923.42px;top:1076px;font-size:17.1px;-webkit-text-stroke:0.35px #131313;color:#131313;letter-spacing:1.068px;">08/04/2025</div><div class="t" style="left:1115.55px;top:1076px;font-size:17.1px;-webkit-text-stroke:0.35px #131313;color:#131313;letter-spacing:0px;">$86.90</div><div class="a" style="left:873px;top:1109.5px;width:400px;height:1px;background:#6e6e6e;"></div><div class="t" style="left:923.42px;top:1129px;font-size:17.1px;-webkit-text-stroke:0.35px #131313;color:#131313;letter-spacing:0.694px;">01/04/2025</div><div class="t" style="left:1115.55px;top:1129px;font-size:17.1px;-webkit-text-stroke:0.35px #131313;color:#131313;letter-spacing:0px;">$86.90</div><div class="a" style="left:873px;top:1162.5px;width:400px;height:1px;background:#6e6e6e;"></div><div class="t" style="left:923.3px;top:1182px;font-size:17.1px;-webkit-text-stroke:0.35px #131313;color:#131313;letter-spacing:0.729px;">25/03/2025</div><div class="t" style="left:1115.55px;top:1182px;font-size:17.1px;-webkit-text-stroke:0.35px #131313;color:#131313;letter-spacing:0px;">$86.90</div><div class="a" style="left:873px;top:1215.5px;width:400px;height:1px;background:#6e6e6e;"></div><div class="t" style="left:922.73px;top:1235px;font-size:17.1px;-webkit-text-stroke:0.35px #131313;color:#131313;letter-spacing:0.452px;">18/03/2025</div><div class="t" style="left:1115.55px;top:1235px;font-size:17.1px;-webkit-text-stroke:0.35px #131313;color:#131313;letter-spacing:0px;">$86.90</div><div class="a" style="left:873px;top:1268.5px;width:400px;height:1px;background:#6e6e6e;"></div>
<div class="a" style="left:1144px;top:0px;width:896px;height:1273px;background:#ffffff;box-shadow:-4px 0 16px rgba(0,0,0,0.38);"></div><div class="a" style="left:1144px;top:0px;width:896px;height:77px;background:linear-gradient(90deg,#16ade2 0%,#3fa8dc 35%,#6aa2d6 65%,#7c9dd4 100%);"></div><div class="a" style="left:1144px;top:76.5px;width:896px;height:2px;background:linear-gradient(90deg,#bfeefa,#dde8f4);"></div><div class="t" style="left:1163.51px;top:27px;font-size:22.3px;font-weight:bold;-webkit-text-stroke:0.2px #ffffff;color:#ffffff;letter-spacing:0.064px;">Update Recurring Payment</div><svg class="a" style="left:1979px;top:16px;" width="42" height="42" viewBox="0 0 42 42"><circle cx="21" cy="21" r="18.5" fill="none" stroke="#fff" stroke-width="3.2"/><path d="M16.6 17.6 L25.6 26.6 M25.6 17.6 L16.6 26.6" stroke="#fff" stroke-width="5.2" stroke-linecap="round"/></svg><div class="a" style="left:1144px;top:78.5px;width:896px;height:1109.5px;background:#e3e3e3;"></div><div class="a" style="left:2032px;top:370px;width:8px;height:818px;background:#a1a1a1;"></div><div class="t" style="left:1164.51px;top:111px;font-size:21.3px;font-weight:bold;-webkit-text-stroke:0.2px #555555;color:#555555;letter-spacing:0.047px;font-weight:bold;">Suspension Charges</div><div class="a" style="left:1164px;top:145px;width:847.5px;height:161px;background:#fff;border:1px solid #d3d3d3;box-sizing:border-box;"></div><div class="a" style="left:1185.5px;top:167px;width:805px;height:105.5px;border:1px solid #cfcfcf;box-sizing:border-box;"></div><div class="t" style="left:1206.74px;top:187px;font-size:15.7px;font-weight:bold;-webkit-text-stroke:0.2px #555555;color:#555555;letter-spacing:0.103px;">Suspension Fee</div><div class="a" style="left:1207.3px;top:213.7px;width:159.3px;height:44.1px;border:1px solid #cccccc;border-radius:6px;box-sizing:border-box;background:#fff;"></div><div class="t" style="left:1217.16px;top:228px;font-size:17.4px;-webkit-text-stroke:0.35px #333;color:#333;letter-spacing:1.137px;">Flat</div><svg class="a" style="left:1349.5px;top:231px;" width="13" height="9" viewBox="0 0 13 9"><path d="M1 1.5 L6.5 7 L12 1.5" fill="none" stroke="#444" stroke-width="1.5"/></svg><div class="a" style="left:1407.6px;top:213.7px;width:45px;height:44.1px;border:1px solid #cccccc;border-radius:6px 0 0 6px;box-sizing:border-box;background:#e9e9e9;"></div><div class="t" style="left:1423.24px;top:228px;font-size:17.4px;-webkit-text-stroke:0.35px #444;color:#444;letter-spacing:0px;">$</div><div class="a" style="left:1451px;top:213.7px;width:116.6px;height:44.1px;border:1.5px solid #5a9bd6;border-radius:0 6px 6px 0;box-sizing:border-box;background:#e2edfb;box-shadow:0 0 5px 2px rgba(110,170,235,0.45);"></div><div class="t" style="left:1460.32px;top:228px;font-size:17.4px;-webkit-text-stroke:0.35px #222;color:#222;letter-spacing:0px;">10</div><div class="a" style="left:1479px;top:224px;width:1.4px;height:25px;background:#111;"></div><div class="t" style="left:1164.98px;top:338px;font-size:21.85px;font-weight:bold;-webkit-text-stroke:0.2px #555555;color:#555555;letter-spacing:0.041px;font-weight:bold;">Taxable Settings</div><div class="a" style="left:1164px;top:374px;width:847.5px;height:86px;background:#fff;border:1px solid #d3d3d3;box-sizing:border-box;"></div><div class="a" style="left:1186px;top:408.3px;width:23px;height:23px;border:2.6px solid #7a7a7a;border-radius:5px;box-sizing:border-box;background:#fff;"></div><div class="a" style="left:1256.6px;top:395px;width:734px;height:44.4px;border:1px solid #d5d5d5;border-radius:6px;box-sizing:border-box;background:#fff;"></div><div class="t" style="left:1260.91px;top:410px;font-size:17.8px;-webkit-text-stroke:0.35px #666;color:#666;letter-spacing:0.114px;">Select Tax Type</div><svg class="a" style="left:1970px;top:413px;" width="11" height="7" viewBox="0 0 11 7"><path d="M0 0 L11 0 L5.5 6.5 Z" fill="#666"/></svg><div class="t" style="left:1164.51px;top:519px;font-size:21.3px;font-weight:bold;-webkit-text-stroke:0.2px #555555;color:#555555;letter-spacing:0.077px;font-weight:bold;">Suspension Warnings</div><div class="a" style="left:1164px;top:553.8px;width:847.5px;height:468.4px;background:#fff;border:1px solid #d3d3d3;box-sizing:border-box;"></div><div class="t" style="left:1184.72px;top:591px;font-size:17.0px;font-weight:bold;-webkit-text-stroke:0.2px #e6000f;color:#e6000f;letter-spacing:0.1px;-webkit-text-stroke:0.45px #e6000f;">Future Sessions Booked</div><div class="t" style="left:1185.67px;top:628px;font-size:16.78px;-webkit-text-stroke:0.35px #555555;color:#555555;letter-spacing:0.008px;">Adam Hapana has booked future sessions during the period of suspension. Select the session you wish to</div><div class="t" style="left:1184.72px;top:652px;font-size:16.78px;-webkit-text-stroke:0.35px #555555;color:#555555;letter-spacing:0.948px;">refund:</div><div class="a" style="left:1185.8px;top:672.6px;width:805px;height:59px;background:#f4f4f4;border:1px solid #d6d6d6;border-bottom:2px solid #cfcfcf;box-sizing:border-box;"></div><div class="t" style="left:1273.93px;top:692px;font-size:15.8px;font-weight:bold;-webkit-text-stroke:0.2px #555555;color:#555555;letter-spacing:0.229px;">Session Name</div><div class="t" style="left:1540.93px;top:692px;font-size:15.8px;font-weight:bold;-webkit-text-stroke:0.2px #555555;color:#555555;letter-spacing:0.311px;">Session Date</div><div class="t" style="left:1741.13px;top:692px;font-size:15.8px;font-weight:bold;-webkit-text-stroke:0.2px #555555;color:#555555;letter-spacing:0.636px;">Payment Status</div><div class="t" style="left:1185.59px;top:761px;font-size:17.9px;font-weight:bold;-webkit-text-stroke:0.2px #e6000f;color:#e6000f;letter-spacing:0.091px;-webkit-text-stroke:0.45px #e6000f;">Credit Overlap Periods</div><div class="t" style="left:1184.95px;top:798px;font-size:15.7px;font-weight:bold;-webkit-text-stroke:0.2px #555555;color:#555555;letter-spacing:0.18px;">For Session Type:</div><div class="t" style="left:1324.34px;top:797px;font-size:16.24px;font-weight:bold;-webkit-text-stroke:0.2px #f0822c;color:#f0822c;letter-spacing:0.022px;-webkit-text-stroke:0.4px #f0822c;">Boxing, Group Classes, Unavailable Session, Evolt Body Scan, General Check-In,</div><div class="t" style="left:1185.92px;top:821px;font-size:16.24px;font-weight:bold;-webkit-text-stroke:0.2px #f0822c;color:#f0822c;letter-spacing:0.004px;-webkit-text-stroke:0.4px #f0822c;">Workshops, BOX, BOX, Jay Test, Test Box, Personal Training, Pilates, Yoga 101, Yoga, Restorative</div><div class="a" style="left:1185.8px;top:842px;width:805px;height:132px;background:#fff;border:1px solid #d6d6d6;border-bottom:2px solid #cfcfcf;box-sizing:border-box;"></div><div class="a" style="left:1186.8px;top:843px;width:803px;height:57.5px;background:#f4f4f4;border-bottom:1px solid #d6d6d6;box-sizing:border-box;"></div><div class="t" style="left:1273.43px;top:861px;font-size:15.8px;font-weight:bold;-webkit-text-stroke:0.2px #555555;color:#555555;letter-spacing:0.404px;">Credit Period Begin</div><div class="t" style="left:1540.93px;top:861px;font-size:15.8px;font-weight:bold;-webkit-text-stroke:0.2px #555555;color:#555555;letter-spacing:0.41px;">Credit Period End</div><div class="t" style="left:1741.13px;top:861px;font-size:15.8px;font-weight:bold;-webkit-text-stroke:0.2px #555555;color:#555555;letter-spacing:0.561px;">No. Credits</div><div class="a" style="left:1207.3px;top:914.6px;width:23px;height:23px;border:2.6px solid #7a7a7a;border-radius:5px;box-sizing:border-box;background:#fff;"></div><div class="t" style="left:1273.43px;top:920px;font-size:16.8px;-webkit-text-stroke:0.35px #555555;color:#555555;letter-spacing:0.151px;">25/11/2024</div><div class="t" style="left:1540.92px;top:920px;font-size:16.8px;-webkit-text-stroke:0.35px #555555;color:#555555;letter-spacing:0.166px;">31/12/2030</div><div class="a" style="left:1742.4px;top:914.8px;width:226.6px;height:43.7px;border:1px solid #cccccc;border-radius:6px;box-sizing:border-box;background:#fff;"></div><div class="t" style="left:1746.8px;top:929px;font-size:18.2px;-webkit-text-stroke:0.35px #333;color:#333;letter-spacing:2.034px;">50000</div><div class="a" style="left:1164px;top:1051px;width:847.5px;height:115px;background:#fff;border:1px solid #d3d3d3;box-sizing:border-box;"></div><div class="t" style="left:1184.56px;top:1075px;font-size:17.1px;-webkit-text-stroke:0.35px #555555;color:#555555;letter-spacing:0.017px;">Please note that all changes will become effective immediately and all future scheduled transactions will</div><div class="t" style="left:1184.73px;top:1101px;font-size:16.6px;-webkit-text-stroke:0.35px #555555;color:#555555;letter-spacing:0.024px;">be updated. If you are re-activating the schedule, your client will be re-prompted to enter payment details and</div><div class="t" style="left:1185.3px;top:1125px;font-size:17.1px;-webkit-text-stroke:0.35px #555555;color:#555555;letter-spacing:0.075px;">confirm the schedule again.</div><div class="a" style="left:1664px;top:1096px;width:86px;height:66px;background:#fff;border-radius:50%;box-shadow:0 1px 3px rgba(0,0,0,0.10);"></div><svg class="a" style="left:1690px;top:1115.7px;" width="36" height="28" viewBox="0 0 36 28"><path d="M7 1.4 H1.4 V7 M29 1.4 H34.6 V7 M1.4 21 V26.6 H7 M34.6 21 V26.6 H29" fill="none" stroke="#e4553b" stroke-width="2.3"/><rect x="4.9" y="4.4" width="2.2" height="18.4" fill="#e4553b"/><rect x="9.3" y="8.3" width="2.0" height="14.5" fill="#e4553b"/><rect x="14.2" y="8.3" width="2.0" height="14.5" fill="#e4553b"/><rect x="19.3" y="4.4" width="2.3" height="18.4" fill="#e4553b"/><rect x="24.0" y="8.3" width="2.0" height="14.5" fill="#e4553b"/><rect x="28.3" y="4.4" width="2.3" height="18.4" fill="#e4553b"/><circle cx="10.3" cy="5.3" r="1.1" fill="#e4553b"/><circle cx="15.2" cy="5.3" r="1.1" fill="#e4553b"/><circle cx="25" cy="5.3" r="1.1" fill="#e4553b"/></svg><div class="a" style="left:1849px;top:1203px;width:169px;height:55px;border:3px solid #cc1729;border-radius:10px;box-sizing:border-box;background:#fff;"></div><div class="a" style="left:1854px;top:1208px;width:159px;height:44.7px;background:#161827;border-radius:6px;"></div><div class="t" style="left:1874.46px;top:1222px;font-size:18.3px;-webkit-text-stroke:0.35px #fff;color:#fff;letter-spacing:0.176px;">Update Status</div>
</div></body></html>
